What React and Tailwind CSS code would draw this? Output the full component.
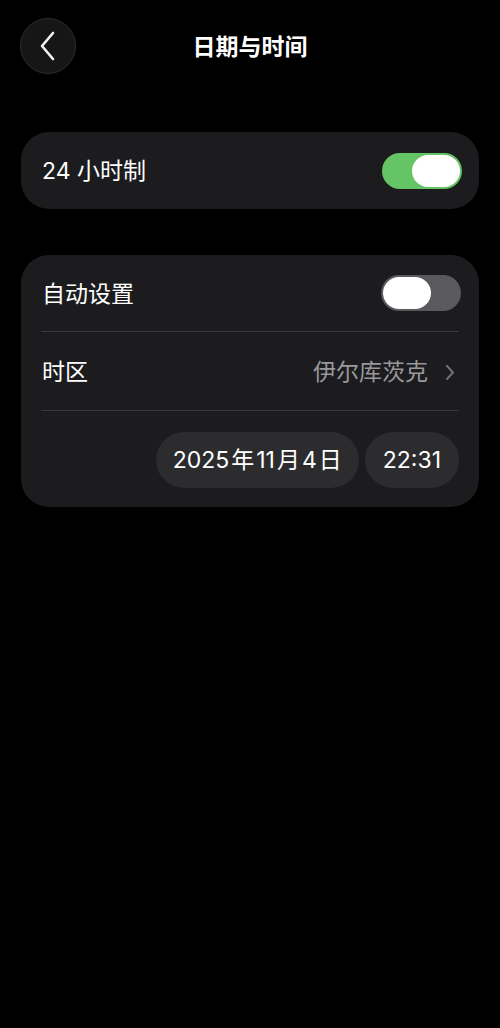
const font = { fontFamily: '"Inter", "Noto Sans CJK SC", sans-serif' };

function Toggle({ on }) {
  return (
    <div
      className={`-mr-[2px] flex h-[36px] w-[80px] items-center rounded-full px-[2px] ${
        on ? "justify-end bg-[#65c466]" : "justify-start bg-[#59595e]"
      }`}
    >
      <div className="h-[32px] w-[48px] rounded-full bg-white" />
    </div>
  );
}

export default function App() {
  return (
    <div className="min-h-[1028px] w-[500px] bg-black text-white" style={font}>
      <header className="relative flex h-[92px] items-start px-[20px] pt-[18px]">
        <button className="flex h-[56px] w-[56px] items-center justify-center rounded-full border border-[#2c2c2e] bg-[#161617]">
          <svg width="18" height="30" viewBox="0 0 18 30" fill="none">
            <path d="M14 2 L3 15 L14 28" stroke="#f2f2f2" strokeWidth="2.6" strokeLinecap="round" strokeLinejoin="round" />
          </svg>
        </button>
        <h1 className="absolute left-0 right-0 top-[33px] text-center text-[23px] font-semibold leading-[28px]">
          日期与时间
        </h1>
      </header>

      <main className="flex flex-col gap-[46px] px-[21px] pt-[40px]">
        <section className="flex h-[77px] items-center justify-between rounded-[28px] bg-[#1c1c1e] pl-[21px] pr-[19px]">
          <span className="pt-[2px] text-[23px] leading-none">24 小时制</span>
          <Toggle on />
        </section>

        <section className="rounded-[28px] bg-[#1c1c1e] px-[20px]">
          <div className="flex h-[77px] items-center justify-between border-b border-[#38383a]">
            <span className="pl-[1px] pt-[3px] text-[23px] leading-none">自动设置</span>
            <Toggle />
          </div>
          <div className="flex h-[79px] items-center justify-between border-b border-[#38383a]">
            <span className="pl-[1px] pt-[3px] text-[23px] leading-none">时区</span>
            <div className="flex items-center gap-[17px] pr-[4px] pt-[2px]">
              <span className="text-[23px] leading-none text-[#98989d]">伊尔库茨克</span>
              <svg width="10" height="17" viewBox="0 0 10 17" fill="none">
                <path d="M2 2 L8 8.5 L2 15" stroke="#6e6e73" strokeWidth="2.2" strokeLinecap="round" strokeLinejoin="round" />
              </svg>
            </div>
          </div>
          <div className="flex justify-end gap-[6px] pb-[19px] pt-[21px]">
            <div className="flex h-[56px] items-center rounded-full bg-[#2c2c2e] px-[17px] text-[23px] leading-none">
              2025<span className="mx-[2px]">年</span>11<span className="mx-[2px]">月</span>4<span className="ml-[2px]">日</span>
            </div>
            <div className="flex h-[56px] items-center rounded-full bg-[#2c2c2e] px-[18px] text-[23px] leading-none">
              22:31
            </div>
          </div>
        </section>
      </main>
    </div>
  );
}
